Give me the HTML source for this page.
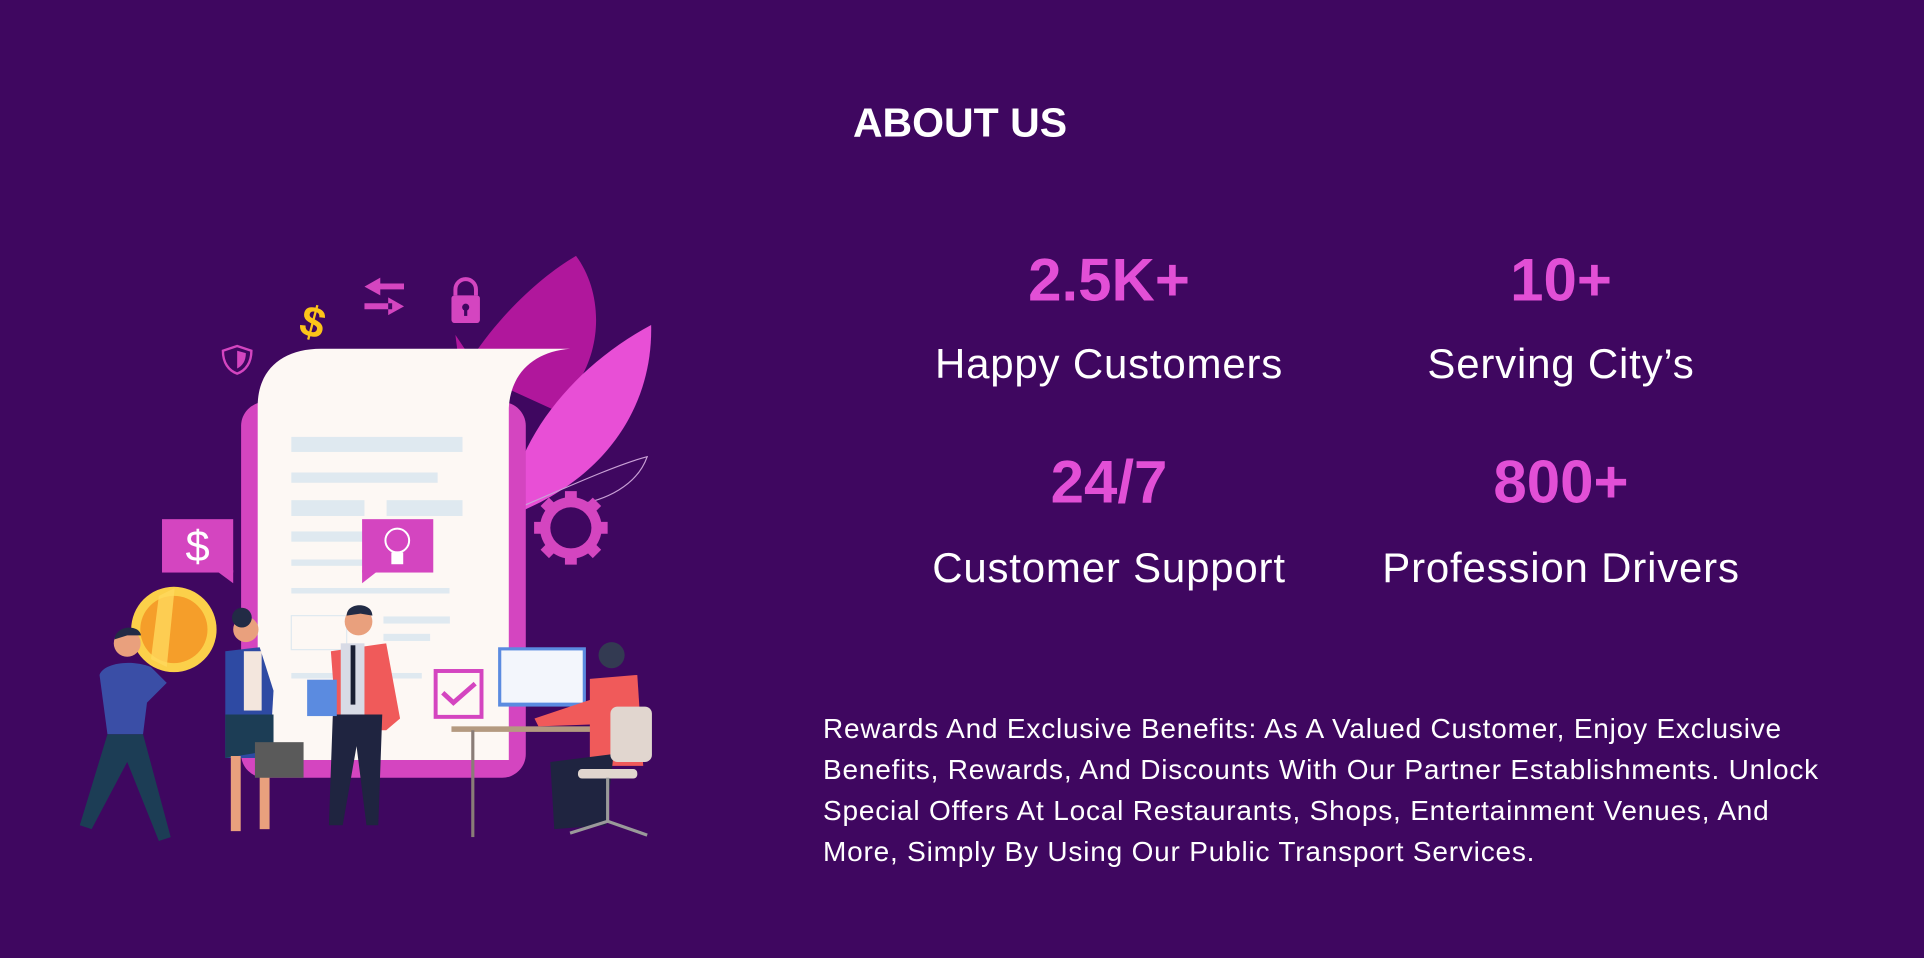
<!DOCTYPE html>
<html><head><meta charset="utf-8"><style>
html,body{margin:0;padding:0;}
body{width:1924px;height:958px;background:#3f0760;position:relative;overflow:hidden;font-family:"Liberation Sans",sans-serif;color:#fff;}
.t{position:absolute;white-space:nowrap;transform:translate(-50%,-50%);}
.h{left:960px;top:123px;font-size:41px;font-weight:bold;}
.n{font-size:60px;font-weight:bold;color:#e24fd6;}
.l{font-size:42px;letter-spacing:0.8px;}
.p{position:absolute;left:823px;top:708px;font-size:28px;line-height:41px;white-space:nowrap;letter-spacing:0.8px;}
svg{position:absolute;left:60px;top:240px;}
</style></head><body>
<div class="t h">ABOUT US</div>
<div class="t n" style="left:1109px;top:280px">2.5K+</div>
<div class="t n" style="left:1561px;top:280px">10+</div>
<div class="t l" style="left:1109px;top:364px">Happy Customers</div>
<div class="t l" style="left:1561px;top:364px">Serving City’s</div>
<div class="t n" style="left:1109px;top:482px">24/7</div>
<div class="t n" style="left:1561px;top:482px">800+</div>
<div class="t l" style="left:1109px;top:568px">Customer Support</div>
<div class="t l" style="left:1561px;top:568px">Profession Drivers</div>
<div class="p">Rewards And Exclusive Benefits: As A Valued Customer, Enjoy Exclusive<br>Benefits, Rewards, And Discounts With Our Partner Establishments. Unlock<br>Special Offers At Local Restaurants, Shops, Entertainment Venues, And<br>More, Simply By Using Our Public Transport Services.</div>
<svg width="620" height="620" viewBox="0 0 1568 1568">
<path d="M1000,240 L1040,300 C1120,180 1220,90 1305,40 C1380,140 1380,320 1250,430 L1010,320 Z" fill="#b0179c"/>
<path d="M1130,700 C1150,500 1300,320 1495,215 C1500,420 1380,610 1130,700 Z" fill="#e84fd6"/>
<path d="M1130,690 C1250,640 1400,570 1485,548 C1460,620 1380,660 1300,670" fill="none" stroke="#c9a0d6" stroke-width="3"/>
<rect x="458" y="410" width="720" height="950" rx="60" fill="#d445c0"/>
<path d="M500,1315 L500,420 C500,330 560,275 660,275 L1290,275 C1200,282 1140,335 1135,425 L1135,1315 Z" fill="#fdf8f4"/>
<g fill="#dfe9f0">
<rect x="585" y="498" width="433" height="38"/><rect x="585" y="588" width="370" height="26"/>
<rect x="585" y="658" width="185" height="40"/><rect x="826" y="658" width="192" height="40"/>
<rect x="585" y="737" width="180" height="26"/><rect x="585" y="808" width="180" height="16"/>
<rect x="585" y="880" width="400" height="14"/><rect x="818" y="952" width="168" height="18"/>
<rect x="818" y="996" width="118" height="18"/><rect x="585" y="1095" width="330" height="14"/>
<rect x="585" y="950" width="140" height="86" fill="none" stroke="#dfe9f0" stroke-width="3"/>
</g>
<g fill="#d445c0">
<circle cx="1292" cy="728" r="78"/>
<g stroke="#d445c0" stroke-width="30"><line x1="1292" y1="635" x2="1292" y2="821"/><line x1="1199" y1="728" x2="1385" y2="728"/><line x1="1226" y1="662" x2="1358" y2="794"/><line x1="1358" y1="662" x2="1226" y2="794"/></g>
<rect x="258" y="706" width="180" height="135"/><path d="M400,840 L438,868 L438,835Z"/>
<rect x="764" y="706" width="180" height="135"/><path d="M764,835 L764,868 L800,840Z"/>
<rect x="990" y="140" width="72" height="70" rx="8"/>
<path d="M795,110 L870,110 L870,125 L795,125Z M770,118 L810,95 L810,140Z M770,160 L840,160 L840,175 L770,175Z M870,168 L830,145 L830,190Z"/>
<path d="M412,280 L448,268 L484,280 C484,310 470,330 448,338 C426,330 412,310 412,280Z" fill="none" stroke="#d445c0" stroke-width="6"/>
<path d="M448,280 L470,286 C470,305 462,318 448,325Z"/>
</g>
<circle cx="1292" cy="728" r="52" fill="#3f0760"/>
<path d="M1000,140 L1000,125 A26,26 0 0 1 1052,125 L1052,140" fill="none" stroke="#d445c0" stroke-width="10"/>
<circle cx="1026" cy="170" r="9" fill="#3f0760"/><rect x="1022" y="170" width="8" height="22" fill="#3f0760"/>
<text x="640" y="245" font-family="Liberation Sans" font-weight="bold" font-size="110" fill="#fcc419" text-anchor="middle" transform="rotate(15 640 205)">$</text>
<text x="348" y="812" font-family="Liberation Sans" font-size="110" fill="#fff" text-anchor="middle">$</text>
<circle cx="853" cy="760" r="30" fill="none" stroke="#fff" stroke-width="5"/><rect x="838" y="790" width="30" height="30" fill="#fff"/>
<rect x="950" y="1090" width="116" height="116" fill="none" stroke="#d445c0" stroke-width="10"/>
<path d="M968,1145 L995,1170 L1050,1122" fill="none" stroke="#d445c0" stroke-width="12"/>
<circle cx="288" cy="985" r="108" fill="#fbd04a"/><circle cx="288" cy="985" r="85" fill="#f59e2a"/>
<path d="M250,900 L290,880 L270,1080 L230,1060Z" fill="#ffd85c" opacity="0.8"/>
<circle cx="170" cy="1020" r="34" fill="#e9a07d"/><path d="M138,1010 C140,975 200,970 205,1000 L170,1000Z" fill="#222b45"/>
<path d="M100,1100 C110,1070 180,1060 230,1080 L270,1120 L220,1170 L210,1250 L120,1250Z" fill="#3a4ea6"/>
<path d="M120,1250 L210,1250 L280,1510 L250,1520 L170,1320 L80,1490 L50,1480Z" fill="#1c3d55"/>
<circle cx="470" cy="985" r="32" fill="#e9a07d"/><circle cx="460" cy="955" r="25" fill="#222b45"/>
<path d="M418,1040 L505,1030 L540,1140 L530,1310 L418,1310Z" fill="#2e4aa3"/>
<rect x="465" y="1040" width="45" height="150" fill="#f3e6dd"/>
<path d="M418,1200 L540,1200 L540,1290 L418,1310Z" fill="#1c3d55"/>
<rect x="432" y="1305" width="25" height="190" fill="#e9a07d"/><rect x="505" y="1300" width="25" height="190" fill="#e9a07d"/>
<rect x="493" y="1270" width="123" height="90" fill="#5a5a5a"/>
<circle cx="755" cy="965" r="35" fill="#e9a07d"/><path d="M725,950 C725,915 790,915 790,950 L760,945Z" fill="#222b45"/>
<path d="M685,1040 L825,1020 L860,1210 L825,1240 L700,1240Z" fill="#f05a5a"/>
<rect x="710" y="1020" width="60" height="180" fill="#d8dbe6"/><rect x="735" y="1025" width="12" height="150" fill="#1a1f33"/>
<path d="M690,1200 L815,1200 L805,1480 L775,1480 L750,1280 L715,1480 L680,1480Z" fill="#1f2440"/>
<rect x="625" y="1112" width="75" height="92" fill="#5b8be0"/>
<rect x="1108" y="1030" width="222" height="150" fill="#5b8be0"/><rect x="1116" y="1038" width="206" height="132" fill="#f3f6fc"/>
<rect x="990" y="1230" width="360" height="14" fill="#b49a80"/>
<rect x="1040" y="1240" width="8" height="270" fill="#8a7d77"/>
<circle cx="1395" cy="1050" r="33" fill="#333a52"/>
<path d="M1340,1110 L1460,1100 L1475,1330 L1340,1330 Z" fill="#f05a5a"/><path d="M1200,1210 L1350,1160 L1350,1225 L1210,1230Z" fill="#f05a5a"/>
<path d="M1240,1320 L1400,1300 L1380,1480 L1250,1490Z" fill="#1f2440"/>
<rect x="1392" y="1180" width="105" height="140" rx="18" fill="#e1d6cf"/>
<rect x="1310" y="1338" width="150" height="24" rx="10" fill="#e1d6cf"/>
<path d="M1385,1360 L1385,1470 M1290,1500 L1385,1470 L1485,1505" stroke="#9a9a9a" stroke-width="8" fill="none"/>
</svg>
</body></html>
